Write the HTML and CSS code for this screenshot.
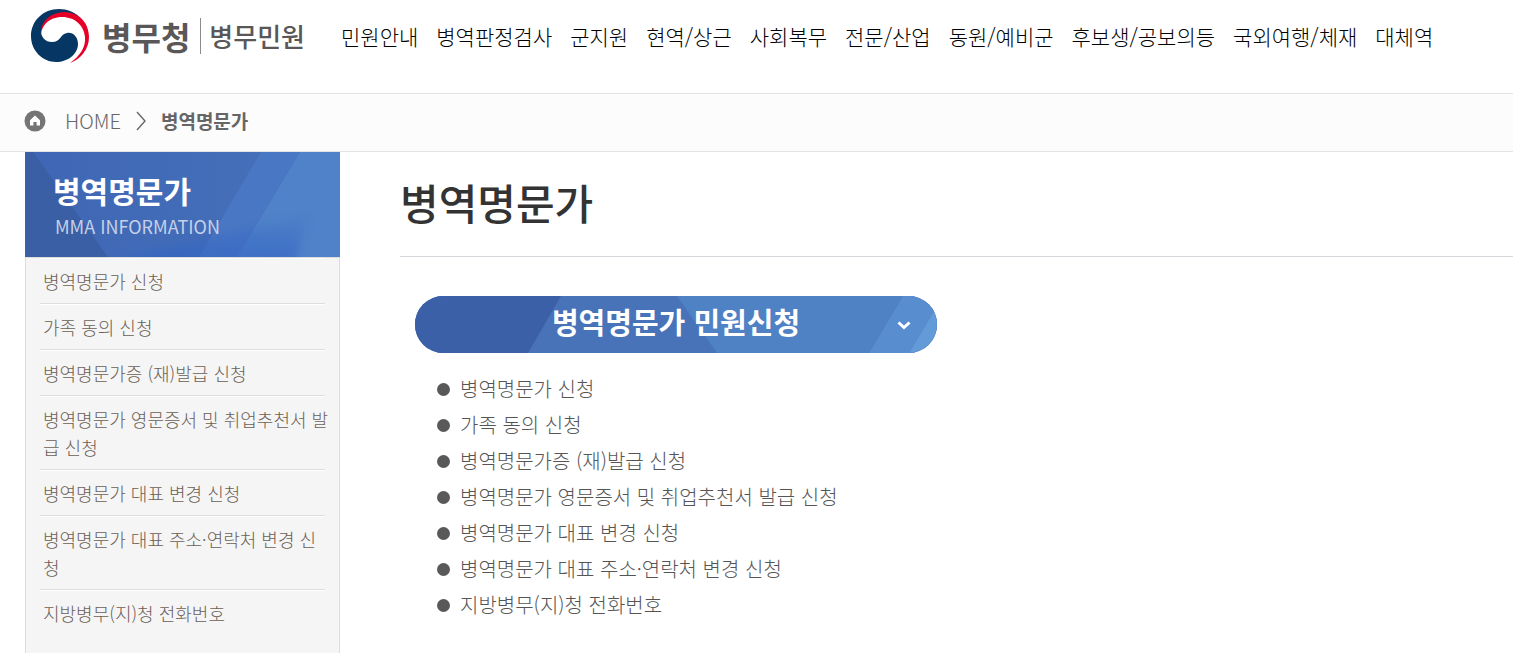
FILE: index.html
```html
<!DOCTYPE html>
<html lang="ko">
  <head>
    <meta charset="UTF-8" />
    <meta name="viewport" content="width=device-width, initial-scale=1.0" />
    <title>병역명문가 | 병무청 병무민원</title>
    <link rel="stylesheet" href="styles.css">
  </head>
  <body>
    <header class="header">
      <a class="logo" href="#">
        <svg class="logo-mark" viewBox="0 0 60 56" aria-hidden="true">
          <path fill="#e60028" d="M11 26 C9 10 22 2 36 3 C50 5 59 16 59 29 C59 41 51 51 40 55 C50 48 56 39 55 29 C54 17 44 8 30 9 C19 10 12 17 11 26 Z" />
          <path fill="#063764" d="M50 10 C45 4 37 1 29 1 C13 1 1 13 1 28 C1 43 13 54 26 54 C38 54 48 46 48 36 C48 29 43 24 37 25 C30 26 31 34 22 34 C15 34 11 29 11 23 C12 12 21 5 33 4 C40 4 46 6 50 10 Z" />
        </svg>
        <span class="logo-name">병무청</span>
        <span class="logo-sub">병무민원</span>
      </a>
      <nav class="gnb">
        <a href="#">민원안내</a>
        <a href="#">병역판정검사</a>
        <a href="#">군지원</a>
        <a href="#">현역/상근</a>
        <a href="#">사회복무</a>
        <a href="#">전문/산업</a>
        <a href="#">동원/예비군</a>
        <a href="#">후보생/공보의등</a>
        <a href="#">국외여행/체재</a>
        <a href="#">대체역</a>
      </nav>
    </header>

    <div class="location">
      <svg class="home-icon" viewBox="0 0 22 22" aria-hidden="true">
        <circle cx="11" cy="11" r="10.5" fill="#757575" />
        <path fill="#fff" d="M11 5.5 L16 10.3 V15.5 H12.6 V12 H9.4 V15.5 H6 V10.3 Z" />
      </svg>
      <a href="#">HOME</a>
      <svg class="arrow" viewBox="0 0 10 20" aria-hidden="true">
        <path d="M1 1 L9 10 L1 19" fill="none" stroke="#666" stroke-width="1.4" />
      </svg>
      <strong>병역명문가</strong>
    </div>

    <div class="container">
      <aside class="side">
        <div class="side-title">
          <svg class="side-bg" viewBox="0 0 315 105" preserveAspectRatio="none" aria-hidden="true">
            <defs>
              <linearGradient id="base" x1="0" y1="0" x2="1" y2="0">
                <stop offset="0" stop-color="#3e66b4" />
                <stop offset="1" stop-color="#4872bb" />
              </linearGradient>
              <linearGradient id="glow" x1="0" y1="0" x2="0" y2="1">
                <stop offset="0" stop-color="#3264c4" stop-opacity="0.1" />
                <stop offset="1" stop-color="#3264c4" stop-opacity="0.7" />
              </linearGradient>
              <filter id="soft">
                <feGaussianBlur stdDeviation="4" />
              </filter>
            </defs>
            <rect width="315" height="105" fill="url(#base)" />
            <path fill="#3a5fa5" d="M0 0 H8 L83 105 H0 Z" />
            <path fill="#4a77c3" d="M236 0 H275 L212 105 H174 Z" />
            <path fill="#4f82c8" d="M275 0 H315 V105 H212 Z" />
            <path fill="url(#glow)" filter="url(#soft)" d="M90 108 C150 92 220 75 285 65 C276 77 276 92 270 112 Z" />
          </svg>
          <h2>병역명문가</h2>
          <p>MMA INFORMATION</p>
        </div>
        <ul class="side-menu">
          <li><a href="#">병역명문가 신청</a></li>
          <li><a href="#">가족 동의 신청</a></li>
          <li><a href="#">병역명문가증 (재)발급 신청</a></li>
          <li><a href="#">병역명문가 영문증서 및 취업추천서 발급 신청</a></li>
          <li><a href="#">병역명문가 대표 변경 신청</a></li>
          <li><a href="#">병역명문가 대표 주소·연락처 변경 신청</a></li>
          <li><a href="#">지방병무(지)청 전화번호</a></li>
        </ul>
      </aside>

      <main class="content">
        <h1>병역명문가</h1>
        <section class="apply">
          <button type="button" class="apply-btn">
            <svg class="apply-bg" viewBox="0 0 522 57" preserveAspectRatio="none" aria-hidden="true">
              <rect width="522" height="57" fill="#4873b8" />
              <path fill="#3b60a7" d="M0 0 H146 L113 57 H0 Z" />
              <path fill="#4f81c5" d="M262 0 H488 L454 57 H302 Z" />
              <path fill="#588dd0" d="M488 0 H528 L494 57 H454 Z" />
              <path fill="#629bd7" d="M528 0 V57 H494 Z" />
            </svg>
            <span>병역명문가 민원신청</span>
            <svg class="chevron" viewBox="0 0 14 9" aria-hidden="true">
              <path d="M1.5 1.5 L7 6.5 L12.5 1.5" fill="none" stroke="#fff" stroke-width="3" />
            </svg>
          </button>
          <ul class="apply-list">
            <li><a href="#">병역명문가 신청</a></li>
            <li><a href="#">가족 동의 신청</a></li>
            <li><a href="#">병역명문가증 (재)발급 신청</a></li>
            <li><a href="#">병역명문가 영문증서 및 취업추천서 발급 신청</a></li>
            <li><a href="#">병역명문가 대표 변경 신청</a></li>
            <li><a href="#">병역명문가 대표 주소·연락처 변경 신청</a></li>
            <li><a href="#">지방병무(지)청 전화번호</a></li>
          </ul>
        </section>
      </main>
    </div>
  </body>
</html>
```

FILE: styles.css
```css
* {
  margin: 0;
  padding: 0;
  box-sizing: border-box;
}

body {
  display: flex;
  flex-direction: column;
  min-height: 100vh;
  font-family: "Noto Sans CJK KR", sans-serif;
  font-weight: 300;
  background: #fff;
  color: #555;
}

a {
  color: inherit;
  text-decoration: none;
}

ul {
  list-style: none;
}

/* header */
.header {
  display: flex;
  align-items: center;
  gap: 36px;
  padding: 8px 30px 29px;
  border-bottom: 1px solid #e4e4e4;
}

.logo {
  display: flex;
  align-items: center;
  flex-shrink: 0;
  color: #595757;
  font-weight: 700;
}

.logo-mark {
  width: 60px;
  height: 56px;
  margin-right: 12px;
}

.logo-name {
  font-size: 32px;
  line-height: 36px;
  padding-right: 10px;
  border-right: 1px solid #8c8c8c;
}

.logo-sub {
  font-size: 26px;
  line-height: 36px;
  padding-left: 8px;
  font-weight: 500;
}

.gnb {
  display: flex;
  gap: 18px;
  font-size: 21px;
  line-height: 32px;
  color: #000;
  white-space: nowrap;
}

/* location */
.location {
  display: flex;
  align-items: center;
  height: 58px;
  padding: 0 24px 4px;
  background: #fcfcfc;
  border-bottom: 1px solid #e4e4e4;
  font-size: 19px;
  color: #666;
}

.location a {
  font-size: 20px;
}

.home-icon {
  width: 22px;
  height: 22px;
  margin-right: 19px;
}

.arrow {
  width: 10px;
  height: 20px;
  margin: 0 15px;
}

.location strong {
  font-weight: 700;
}

/* layout */
.container {
  display: flex;
  flex: 1;
  gap: 60px;
  padding-left: 25px;
}

.side {
  display: flex;
  flex-direction: column;
  flex: 0 0 315px;
}

.side-title {
  position: relative;
  height: 105px;
  padding: 16px 28px 0;
  color: #fff;
}

.side-bg {
  position: absolute;
  top: 0;
  left: 0;
  width: 100%;
  height: 100%;
}

.side-title h2 {
  position: relative;
  font-size: 30px;
  line-height: 44px;
  font-weight: 700;
}

.side-title p {
  position: relative;
  padding-left: 2px;
  font-size: 18px;
  line-height: 28px;
  font-weight: 400;
  color: #c5d1e9;
}

.side-menu {
  flex: 1;
  padding: 0 0 24px 14px;
  background: #f5f5f5;
  border: 1px solid #dcdcdc;
  border-bottom: 0;
  font-size: 18px;
  line-height: 28px;
  color: #6b5f55;
  word-break: break-all;
}

.side-menu li {
  margin-right: 14px;
  border-top: 1px solid #fff;
  border-bottom: 1px solid #dedede;
}

.side-menu li:last-child {
  border-bottom: 0;
}

.side-menu a {
  display: block;
  margin-right: -4px;
  padding: 8px 0 8px 3px;
}

/* content */
.content {
  flex: 1;
  min-width: 0;
}

.content h1 {
  padding: 20px 0 24px;
  border-bottom: 1px solid #d5d8dd;
  font-size: 42px;
  line-height: 60px;
  font-weight: 500;
  color: #333;
}

.apply {
  max-width: 552px;
  padding: 39px 15px 30px;
}

.apply-btn {
  position: relative;
  display: flex;
  align-items: center;
  justify-content: center;
  width: 100%;
  height: 57px;
  padding-bottom: 8px;
  overflow: hidden;
  border: 0;
  border-radius: 29px;
  background: #4873b8;
  color: #fff;
  font-family: inherit;
  font-size: 29px;
  font-weight: 700;
  cursor: pointer;
}

.apply-btn span {
  position: relative;
}

.apply-bg {
  position: absolute;
  top: 0;
  left: 0;
  width: 100%;
  height: 100%;
}

.chevron {
  position: absolute;
  top: 25px;
  right: 26px;
  width: 14px;
  height: 9px;
}

.apply-list {
  padding: 18px 0 0 22px;
  font-size: 20px;
  line-height: 36px;
}

.apply-list li {
  display: flex;
  align-items: center;
  gap: 10px;
  white-space: nowrap;
}

.apply-list li::before {
  content: "";
  width: 13px;
  height: 13px;
  border-radius: 50%;
  background: #595959;
}
```
